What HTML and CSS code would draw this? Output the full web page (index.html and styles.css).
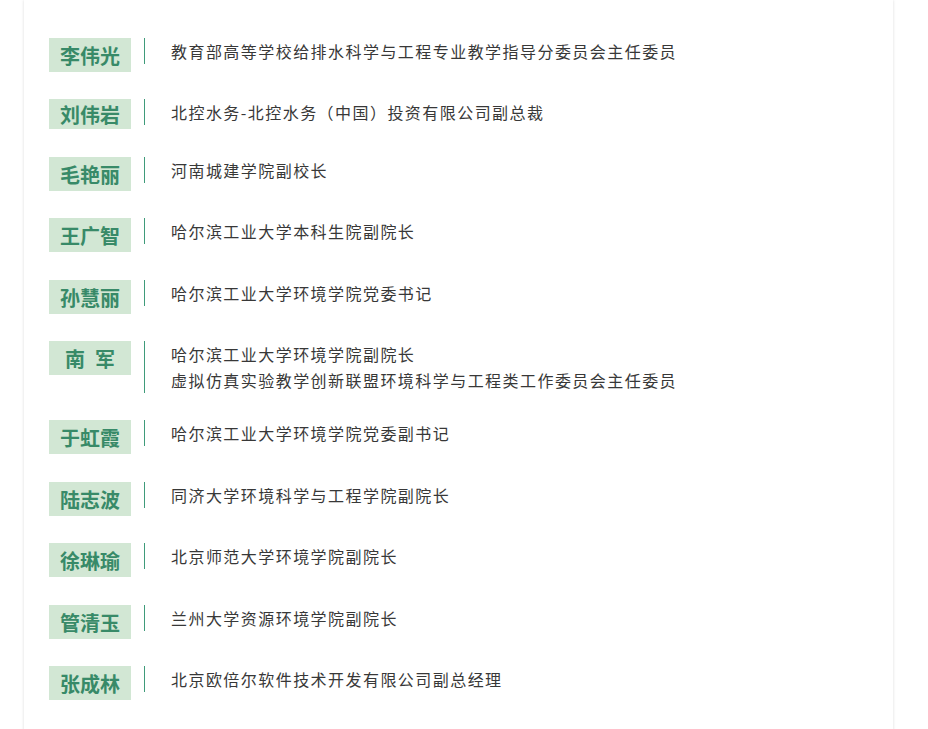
FILE: index.html
```html
<!DOCTYPE html>
<html lang="zh-CN">
<head>
<meta charset="utf-8">
<title>委员名单</title>
<link rel="stylesheet" href="styles.css">
</head>
<body>
<div class="card">
  <ul class="members">
    <li class="member"><span class="name">李伟光</span><div class="desc"><p>教育部高等学校给排水科学与工程专业教学指导分委员会主任委员</p></div></li>
    <li class="member"><span class="name name--short">刘伟岩</span><div class="desc"><p>北控水务-北控水务（中国）投资有限公司副总裁</p></div></li>
    <li class="member"><span class="name">毛艳丽</span><div class="desc"><p>河南城建学院副校长</p></div></li>
    <li class="member"><span class="name">王广智</span><div class="desc"><p>哈尔滨工业大学本科生院副院长</p></div></li>
    <li class="member"><span class="name">孙慧丽</span><div class="desc"><p>哈尔滨工业大学环境学院党委书记</p></div></li>
    <li class="member"><span class="name">南&ensp;军</span><div class="desc"><p>哈尔滨工业大学环境学院副院长</p><p>虚拟仿真实验教学创新联盟环境科学与工程类工作委员会主任委员</p></div></li>
    <li class="member"><span class="name">于虹霞</span><div class="desc"><p>哈尔滨工业大学环境学院党委副书记</p></div></li>
    <li class="member"><span class="name">陆志波</span><div class="desc"><p>同济大学环境科学与工程学院副院长</p></div></li>
    <li class="member"><span class="name">徐琳瑜</span><div class="desc"><p>北京师范大学环境学院副院长</p></div></li>
    <li class="member"><span class="name">管清玉</span><div class="desc"><p>兰州大学资源环境学院副院长</p></div></li>
    <li class="member"><span class="name">张成林</span><div class="desc"><p>北京欧倍尔软件技术开发有限公司副总经理</p></div></li>
  </ul>
</div>
</body>
</html>
```

FILE: styles.css
```css
html, body {
  margin: 0;
  padding: 0;
  background: #ffffff;
}

body {
  font-family: "Noto Sans CJK SC", "Noto Sans", sans-serif;
  overflow: hidden;
}

.card {
  margin-left: 24px;
  width: 869px;
  min-height: 760px;
  background: #ffffff;
  box-shadow: 0 0 3px rgba(0, 0, 0, 0.14);
  box-sizing: border-box;
  padding: 38px 0 0 25px;
}

.members {
  list-style: none;
  margin: 0;
  padding: 0;
}

.member {
  display: flex;
  align-items: flex-start;
  margin-bottom: 27.4px;
}

.name {
  flex: 0 0 82px;
  height: 34px;
  line-height: 35px;
  background: #d2e7d4;
  color: #388a68;
  font-size: 20px;
  font-weight: 700;
  text-align: center;
  white-space: nowrap;
}

.name--short {
  height: 30px;
  line-height: 31px;
}

.desc {
  margin-left: 13px;
  border-left: 1px solid #3f9b7a;
  padding-left: 26px;
  color: #383838;
  font-size: 16px;
  line-height: 26px;
  letter-spacing: 1.45px;
}

.desc p {
  margin: 0;
}
```
